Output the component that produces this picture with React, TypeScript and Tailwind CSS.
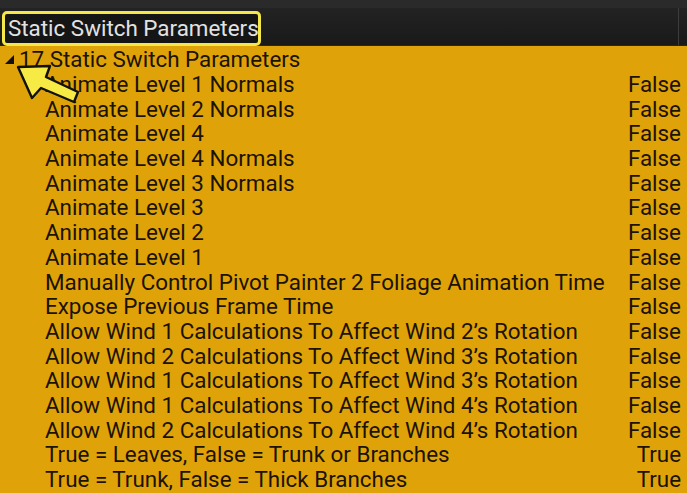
import React from 'react';

const rows: [string, string][] = [
  ['Animate Level 1 Normals', 'False'],
  ['Animate Level 2 Normals', 'False'],
  ['Animate Level 4', 'False'],
  ['Animate Level 4 Normals', 'False'],
  ['Animate Level 3 Normals', 'False'],
  ['Animate Level 3', 'False'],
  ['Animate Level 2', 'False'],
  ['Animate Level 1', 'False'],
  ['Manually Control Pivot Painter 2 Foliage Animation Time', 'False'],
  ['Expose Previous Frame Time', 'False'],
  ['Allow Wind 1 Calculations To Affect Wind 2\u2019s Rotation', 'False'],
  ['Allow Wind 2 Calculations To Affect Wind 3\u2019s Rotation', 'False'],
  ['Allow Wind 1 Calculations To Affect Wind 3\u2019s Rotation', 'False'],
  ['Allow Wind 1 Calculations To Affect Wind 4\u2019s Rotation', 'False'],
  ['Allow Wind 2 Calculations To Affect Wind 4\u2019s Rotation', 'False'],
  ['True = Leaves, False = Trunk or Branches', 'True'],
  ['True = Trunk, False = Thick Branches', 'True'],
];

const App: React.FC = () => {
  return (
    <div
      className="relative w-[687px] h-[493px] overflow-hidden bg-[#dfa309]"
      style={{ fontFamily: 'Roboto, "Liberation Sans", sans-serif' }}
    >
      {/* top strip */}
      <div className="h-[8px] bg-[#2a2a2a]" />
      {/* header */}
      <div className="relative h-[38px] bg-gradient-to-b from-[#232323] to-[#191919] border-b border-[#2a2a10] flex items-center">
        <div className="ml-[2px] mt-[3px] h-[35px] w-[259px] rounded-[5px] border-[3px] border-[#f3e74a] bg-[#151515] flex items-center pl-[3px] whitespace-nowrap overflow-hidden">
          <span className="text-[22.4px] leading-none text-[#e2e2e2]">Static Switch Parameters</span>
        </div>
        <div className="absolute right-[8px] top-0 h-full w-px bg-[#3c3c3c]" />
      </div>

      {/* body */}
      <div className="text-[22.4px] leading-[24.7px] text-[#1b1200]">
        <div className="flex items-center h-[26px] whitespace-nowrap">
          <span className="ml-[5px] mr-[5px] w-0 h-0 border-l-[9px] border-l-transparent border-b-[9px] border-b-[#111] mt-[1px]" />
          <span>17 Static Switch Parameters</span>
        </div>
        {rows.map(([label, value], i) => (
          <div key={i} className="flex justify-between pl-[45px] pr-[6px] h-[24.7px] whitespace-nowrap">
            <span>{label}</span>
            <span>{value}</span>
          </div>
        ))}
      </div>

      {/* callout arrow */}
      <svg className="absolute left-0 top-0" width="100" height="110" viewBox="0 0 100 110">
        <path
          d="M18 67 L50 66 L46 77 L78 92 L74 102 L41 88 L32 98 Z"
          fill="#f8ea45"
          stroke="#111"
          strokeWidth="2.4"
          strokeLinejoin="round"
        />
      </svg>
    </div>
  );
};

export default App;
